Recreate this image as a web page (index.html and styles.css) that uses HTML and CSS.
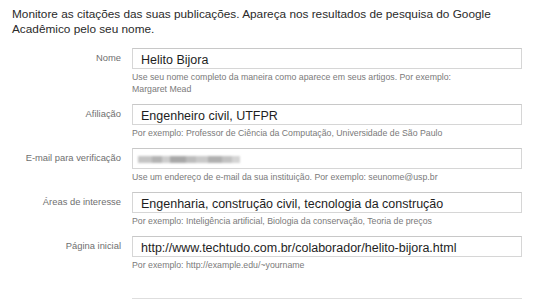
FILE: index.html
```html
<!DOCTYPE html>
<html lang="pt-BR">

<head>
    <meta charset="UTF-8" />
    <meta name="viewport" content="width=device-width, initial-scale=1.0" />
    <title>Perfil</title>
    <link rel="stylesheet" href="styles.css">
</head>

<body>
    <div class="page">
        <p class="intro">Monitore as citações das suas publicações. Apareça nos resultados de pesquisa do Google Acadêmico pelo seu nome.</p>

        <div class="profile-form">
            <label class="row-label" for="nome">Nome</label>
            <div class="field">
                <input type="text" id="nome" class="text-input" value="Helito Bijora" />
                <div class="hint">Use seu nome completo da maneira como aparece em seus artigos. Por exemplo: Margaret Mead</div>
            </div>

            <label class="row-label" for="afiliacao">Afiliação</label>
            <div class="field">
                <input type="text" id="afiliacao" class="text-input" value="Engenheiro civil, UTFPR" />
                <div class="hint">Por exemplo: Professor de Ciência da Computação, Universidade de São Paulo</div>
            </div>

            <label class="row-label" for="email">E-mail para verificação</label>
            <div class="field">
                <div class="text-input blurred-box" id="email">
                    <!-- endereço borrado -->
                    <span class="blur">
                        <i style="width:14px;background:#c4c4c4"></i>
                        <i style="width:10px;background:#b3b3b3"></i>
                        <i style="width:8px;background:#cdcdcd"></i>
                        <i style="width:16px;background:#a8a8a8"></i>
                        <i style="width:10px;background:#bcbcbc"></i>
                        <i style="width:12px;background:#c9c9c9"></i>
                        <i style="width:14px;background:#b0b0b0"></i>
                        <i style="width:10px;background:#c2c2c2"></i>
                        <i style="width:8px;background:#d4d4d4"></i>
                    </span>
                </div>
                <div class="hint">Use um endereço de e-mail da sua instituição. Por exemplo: seunome@usp.br</div>
            </div>

            <label class="row-label" for="areas">Áreas de interesse</label>
            <div class="field">
                <input type="text" id="areas" class="text-input" value="Engenharia, construção civil, tecnologia da construção" />
                <div class="hint">Por exemplo: Inteligência artificial, Biologia da conservação, Teoria de preços</div>
            </div>

            <label class="row-label" for="pagina">Página inicial</label>
            <div class="field">
                <input type="text" id="pagina" class="text-input" value="http://www.techtudo.com.br/colaborador/helito-bijora.html" />
                <div class="hint">Por exemplo: http://example.edu/~yourname</div>
            </div>

            <div class="divider"></div>
        </div>
    </div>
</body>

</html>
```

FILE: styles.css
```css
* {
    box-sizing: border-box;
}

body {
    margin: 0;
    background: #fff;
    font-family: "Liberation Sans", Arial, sans-serif;
}

.page {
    padding: 7px 12px 0;
}

.intro {
    margin: 0;
    width: 510px;
    font-size: 11.8px;
    line-height: 15px;
    color: #2a2a2a;
}

.profile-form {
    display: grid;
    grid-template-columns: 109px 390px;
    column-gap: 11px;
    row-gap: 9px;
    margin-top: 11px;
}

.row-label {
    padding-top: 4px;
    text-align: right;
    font-size: 9.4px;
    line-height: 12px;
    color: #6f6f6f;
}

.field {
    display: flex;
    flex-direction: column;
}

.text-input {
    width: 100%;
    height: 21px;
    margin: 0;
    padding: 3px 8px 0;
    border: 1px solid #d6d6d6;
    border-top-color: #c8c8c8;
    border-radius: 0;
    outline: none;
    background: #fff;
    font-family: "Liberation Sans", Arial, sans-serif;
    font-size: 12.5px;
    color: #1e1e1e;
}

.blurred-box {
    display: flex;
    align-items: center;
    padding: 2px 8px 0 5px;
}

.blur {
    display: flex;
    height: 7px;
    filter: blur(1.2px);
}

.blur i {
    display: block;
    height: 100%;
}

.hint {
    max-width: 340px;
    margin-top: 2px;
    font-size: 8.75px;
    line-height: 12px;
    color: #7a7a7a;
}

.divider {
    grid-column: 2;
    margin-top: 18px;
    border-top: 1px solid #dedede;
}
```
